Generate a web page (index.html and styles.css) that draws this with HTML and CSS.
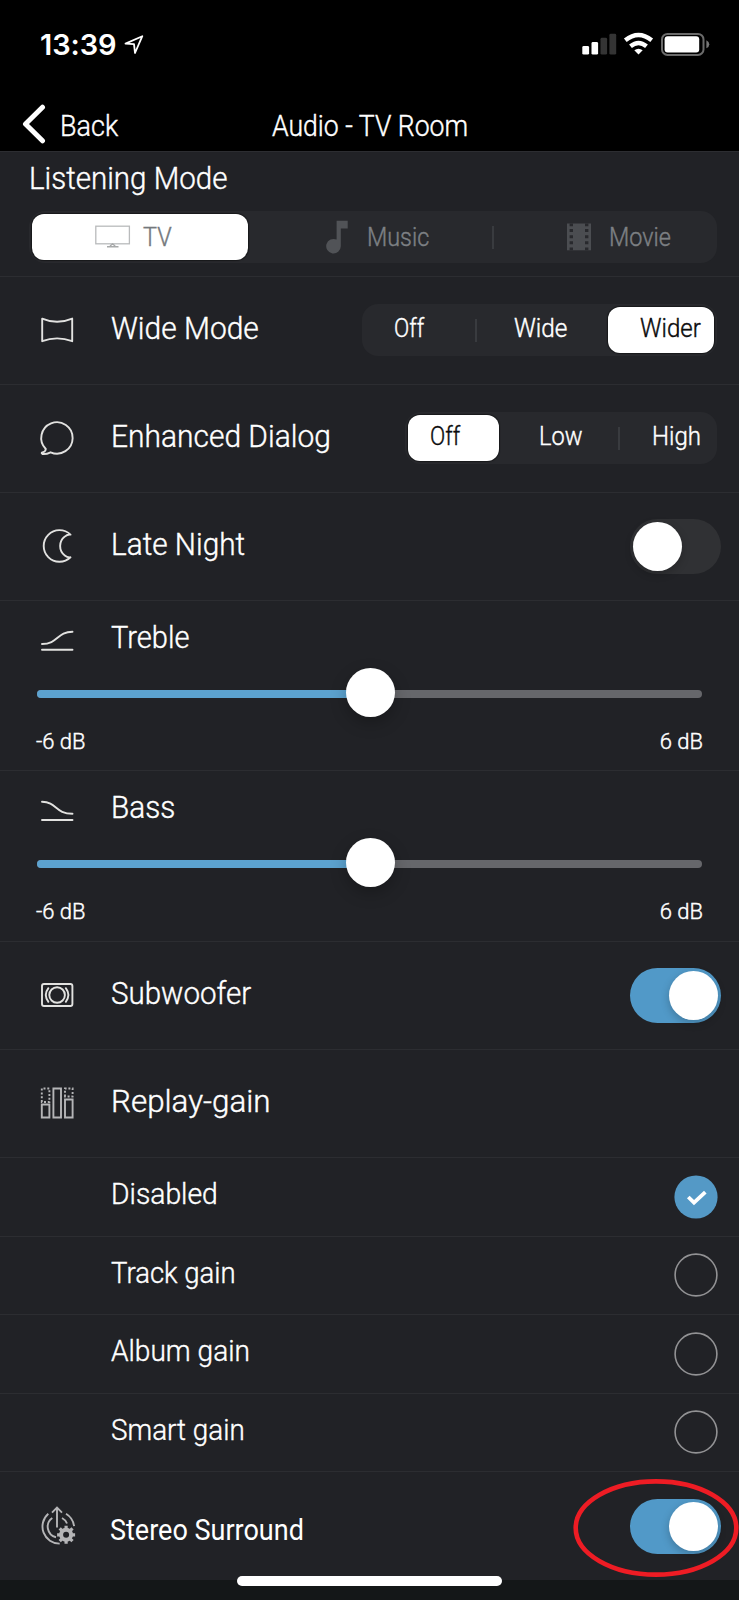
FILE: index.html
```html
<!DOCTYPE html>
<html lang="en">
<head>
<meta charset="utf-8">
<title>Audio - TV Room</title>
<link rel="stylesheet" href="styles.css">
</head>
<body>
<div class="screen">
  <div class="status">
    <span class="time">13:39</span>
    <svg class="loc" width="20" height="20" viewBox="0 0 20 20"><path d="M1.5 8.6 L18.3 1.2 L11 18 L10 9.2 Z" fill="none" stroke="#fff" stroke-width="1.8" stroke-linejoin="round"/></svg>
    <svg class="system" width="128" height="24" viewBox="0 0 128 24">
      <g fill="#fff"><rect x=".3" y="14" width="6.8" height="8.6" rx="1.4"/><rect x="9.5" y="10" width="6.6" height="12.6" rx="1.4"/></g>
      <g fill="#343434"><rect x="18.5" y="5.8" width="6.6" height="16.8" rx="1.4"/><rect x="27.4" y="1.8" width="6.8" height="20.8" rx="1.4"/></g>
      <g fill="none" stroke="#fff" stroke-width="4.4"><path d="M43.3 8.2 Q56.5 -2.3 69.7 8.2"/><path d="M48.5 14.2 Q56.5 7.7 64.5 14.2"/></g>
      <path d="M52.3 18.3 Q56.5 15.3 60.7 18.3 L56.5 22.5 Z" fill="#fff"/>
      <rect x="80" y="1.9" width="41.5" height="21" rx="5.5" fill="none" stroke="#6b6b6b" stroke-width="2"/>
      <rect x="82.6" y="4.2" width="34.6" height="16.2" rx="3" fill="#fff"/>
      <path d="M124.4 8.2 Q127.3 9.5 127.3 12.2 Q127.3 14.9 124.4 16.2Z" fill="#767676"/>
    </svg>
  </div>
  <div class="nav">
    <div class="back">
      <svg width="24" height="40" viewBox="0 0 24 40"><path d="M20.5 3.2 L3.5 20 L20.5 36.8" fill="none" stroke="#fff" stroke-width="5" stroke-linecap="round" stroke-linejoin="round"/></svg>
      <span class="text w930">Back</span>
    </div>
    <span class="text w917">Audio - TV Room</span>
  </div>

  <section class="mode">
    <h2 class="text w923">Listening Mode</h2>
    <div class="seg seg-mode">
      <div class="opt on tv">
        <svg width="36" height="24" viewBox="0 0 36 24"><rect x=".8" y="1.2" width="33.6" height="17.6" fill="none" stroke="#b9bbbc" stroke-width="1.3"/><path d="M12 21.8H23.5M15 21 L17.6 19 L20.2 21" fill="none" stroke="#a7a9aa" stroke-width="1.4"/></svg>
        <span class="text w900">TV</span>
      </div>
      <div class="opt music">
        <svg width="22" height="34" viewBox="0 0 22 34"><path d="M10.6 .7H21.7V8.4H14.8V26.3A7.3 7.3 0 1 1 10.6 19.6Z" fill="#515357"/></svg>
        <span class="text w900">Music</span>
      </div>
      <div class="opt movie">
        <svg width="24" height="28" viewBox="0 0 24 28"><path d="M0 .5H24V27.3H0Z" fill="#4b4d51"/><path d="M2.6 .5V3.2H6V.5ZM2.6 6H6V9H2.6ZM2.6 12.2H6V15.2H2.6ZM2.6 18.2H6V21.2H2.6ZM2.6 24.4H6V27.3H2.6ZM18 .5V3.2H21.4V.5ZM18 6H21.4V9H18ZM18 12.2H21.4V15.2H18ZM18 18.2H21.4V21.2H18ZM18 24.4H21.4V27.3H18Z" fill="#28292d"/></svg>
        <span class="text w900">Movie</span>
      </div>
    </div>
  </section>

  <section class="row">
    <svg class="icon" viewBox="0 0 40 40"><path d="M5.2 8.6 Q20 15 35.2 8.6 V31.2 Q20 25.6 5.2 31.2Z"/></svg>
    <span class="label text w936">Wide Mode</span>
    <div class="seg seg-wide">
      <div class="opt"><span class="text w863">Off</span></div>
      <div class="opt"><span class="text w936">Wide</span></div>
      <div class="opt on"><span class="text w924">Wider</span></div>
    </div>
  </section>

  <section class="row">
    <svg class="icon" viewBox="0 0 40 40"><path d="M8.8 31 A15.7 15.7 0 1 1 13.6 34.3 Q9.5 36.3 5.6 36 Q3.8 35.3 5.4 34.4 Q8.6 33.8 8.8 31Z"/></svg>
    <span class="label text w936">Enhanced Dialog</span>
    <div class="seg seg-dialog">
      <div class="opt on"><span class="text w863">Off</span></div>
      <div class="opt"><span class="text w906">Low</span></div>
      <div class="opt"><span class="text w924">High</span></div>
    </div>
  </section>

  <section class="row">
    <svg class="icon" viewBox="0 0 40 40"><path d="M33.5 8.6 A15.8 15.8 0 1 0 33.5 31.3 Q30.5 31.8 27.8 29.6 A12 12 0 0 1 27.8 10.6 Q30.5 8.3 33.5 8.6Z"/></svg>
    <span class="label text w930">Late Night</span>
    <div class="toggle"></div>
  </section>

  <section class="level">
    <div class="head">
      <svg class="icon" viewBox="0 0 40 40"><path d="M5 26 C21 26 20 13.8 35.5 13.8M5 31.8H35.5"/></svg>
      <span class="label text w908">Treble</span>
    </div>
    <div class="slider"><div class="fill"></div><div class="knob"></div></div>
    <div class="scale"><span>-6 dB</span><span>6 dB</span></div>
  </section>

  <section class="level bass">
    <div class="head">
      <svg class="icon" viewBox="0 0 40 40"><path d="M5 13.8 C20 13.8 18 25.8 35.5 25.8M5 32H35.5"/></svg>
      <span class="label text w930">Bass</span>
    </div>
    <div class="slider"><div class="fill"></div><div class="knob"></div></div>
    <div class="scale"><span>-6 dB</span><span>6 dB</span></div>
  </section>

  <section class="row">
    <svg class="icon" viewBox="0 0 40 40"><rect x="5" y="9" width="30.4" height="22" rx="2"/><circle cx="20.1" cy="20" r="7.8"/><path d="M11.4 13.2 Q6.2 20 11.4 26.8M28.8 13.2 Q34 20 28.8 26.8"/></svg>
    <span class="label text w923">Subwoofer</span>
    <div class="toggle checked"></div>
  </section>

  <section class="row">
    <svg class="icon gray" viewBox="0 0 40 40"><path d="M4.8 21.5H12.4V34.5H4.8ZM16.4 5.5H24V34.5H16.4ZM28 16.5H35.6V34.5H28Z"/><path stroke-dasharray="2 1.8" d="M4.8 19V5.5H12.4V19ZM28 13.5V5.5H35.6V13.5Z"/></svg>
    <span class="label text w980">Replay-gain</span>
  </section>

  <section class="row choice"><span class="label text w943">Disabled</span>
    <svg class="radio" viewBox="0 0 44 44"><circle cx="22" cy="22" r="21.6" fill="#5499c6"/><path d="M14.3 22 L20 27.6 L31.3 17.2" fill="none" stroke="#fff" stroke-width="3.8"/></svg>
  </section>
  <section class="row choice"><span class="label text w917">Track gain</span>
    <svg class="radio" viewBox="0 0 44 44"><circle cx="22" cy="22" r="20.9" fill="none" stroke="#929294" stroke-width="1.6"/></svg>
  </section>
  <section class="row choice"><span class="label text w936">Album gain</span>
    <svg class="radio" viewBox="0 0 44 44"><circle cx="22" cy="22" r="20.9" fill="none" stroke="#929294" stroke-width="1.6"/></svg>
  </section>
  <section class="row choice"><span class="label text w927">Smart gain</span>
    <svg class="radio" viewBox="0 0 44 44"><circle cx="22" cy="22" r="20.9" fill="none" stroke="#929294" stroke-width="1.6"/></svg>
  </section>

  <section class="row stereo">
    <svg class="icon gray" viewBox="0 0 40 40">
      <path d="M20 21.5V2M15 6.7L20 1.7L25 6.7M11.3 7.8A17 17 0 0 0 22.7 37.6M29 7.8A17 17 0 0 1 37.1 20.2M15.3 12A10.7 10.7 0 0 0 19 31.2M25 12A10.7 10.7 0 0 1 30 17.5"/>
      <g transform="translate(29.1 28.8)"><circle r="5" stroke-width="4"/><path stroke-width="3.2" d="M0-5V-9M0 5V9M-5 0H-9M5 0H9M3.6-3.6L6.4-6.4M-3.6 3.6L-6.4 6.4M-3.6-3.6L-6.4-6.4M3.6 3.6L6.4 6.4"/></g>
    </svg>
    <span class="label text w900">Stereo Surround</span>
    <div class="toggle checked"></div>
    <svg class="mark" width="170" height="102" viewBox="0 0 170 102"><ellipse cx="85" cy="51" rx="80.3" ry="46.6" fill="none" stroke="#ee1c24" stroke-width="4.6"/></svg>
  </section>
  <div class="home"><div class="bar"></div></div>
</div>
</body>
</html>
```
FILE: styles.css
```css
* { box-sizing: border-box; }
body { margin: 0; background: #141718; }
.screen {
  width: 739px; height: 1600px; overflow: hidden;
  font-family: Roboto, "Liberation Sans", sans-serif; font-weight: 300;
  color: #fff; display: flex; flex-direction: column;
}
svg { display: block; flex: none; }
h2 { margin: 0; font-weight: 300; }

/* Labels are condensed slightly; each class holds its horizontal ratio. */
.text { display: block; white-space: nowrap; transform: scaleX(var(--sx, 1)); transform-origin: left center; -webkit-text-stroke: .4px currentColor; }
.w863 { --sx: .863; } .w900 { --sx: .9; } .w906 { --sx: .906; }
.w908 { --sx: .908; } .w917 { --sx: .917; } .w923 { --sx: .923; } .w924 { --sx: .924; }
.w927 { --sx: .927; } .w930 { --sx: .93; } .w936 { --sx: .936; }
.w943 { --sx: .943; } .w980 { --sx: .98; }

.status { height: 88px; flex: none; background: #000; display: flex; align-items: flex-start; padding: 32px 29px 0 40px; }
.time { font: 600 29px/25px Inter, sans-serif; width: 84px; letter-spacing: -.1px; }
.loc { margin-top: 3px; }
.system { margin-left: auto; }

.nav { height: 63px; flex: none; background: #000; display: grid; grid-template-columns: 272px 1fr; align-items: center; font-size: 29px; line-height: 40px; padding-top: 13px; }
.back { display: flex; align-items: center; padding-left: 22px; gap: 14px; }
.back svg { margin-top: -4px; }

section { background: #212226; border-top: 1px solid #2c2d31; flex: none; }
.mode { height: 125px; padding: 6px 22px 0 29px; }
.mode h2 { font-size: 32px; line-height: 40px; margin-bottom: 13px; }

.seg { display: grid; height: 52px; padding: 3px; border-radius: 16px; background: #28292d; font-size: 26px; line-height: 36px; flex: none; }
.opt { display: flex; align-items: center; }
.opt.on { background: #fff; color: #0c0c0d; border-radius: 12px; box-shadow: 0 0 1px 1px #17181a; }
.seg-mode { grid-template-columns: 216px 246px 1fr; color: #7d8084; }
.seg-mode .on { color: #74787c; }
.tv { padding-left: 63px; gap: 12px; }
.music { padding-left: 78px; gap: 19px; }
.movie { padding-left: 73px; gap: 18px; }
.music::after, .seg-wide .opt:first-child::after, .seg-dialog .opt:nth-child(2)::after {
  content: ""; width: 2px; height: 23px; background: #393b3f; margin-left: auto;
}
.seg-wide, .seg-dialog { margin-top: -1px; }
.seg-wide .text, .seg-dialog .text { margin-bottom: 4px; }
.seg-wide { width: 355px; grid-template-columns: 112px 131px 1fr; }
.seg-wide .opt { padding-left: 29px; }
.seg-wide .opt:nth-child(2) { padding-left: 37px; }
.seg-wide .on { padding-left: 32px; }
.seg-dialog { width: 312px; grid-template-columns: 91px 121px 1fr; }
.seg-dialog .opt { padding-left: 22px; }
.seg-dialog .opt:nth-child(2) { padding-left: 40px; }
.seg-dialog .opt:nth-child(3) { padding-left: 32px; }

.row { height: 108px; display: flex; align-items: center; padding: 0 22px 0 37px; position: relative; }
.icon { width: 40px; height: 40px; overflow: visible; fill: none; stroke: #e2e2e0; stroke-width: 1.9; stroke-linecap: round; stroke-linejoin: round; }
.icon.gray { stroke: #b5b5b7; stroke-linecap: butt; stroke-linejoin: miter; }
.label { font-size: 32px; line-height: 40px; width: 240px; margin-left: 34px; }
.row .label { margin-bottom: 6px; margin-right: auto; }
.row .icon { margin-top: -1px; }

.toggle { width: 91px; height: 55px; border-radius: 28px; background: #303134; padding: 3px; display: flex; margin-right: -4px; flex: none; }
.toggle::before { content: ""; width: 49px; height: 49px; border-radius: 50%; background: #fff; box-shadow: 0 3px 9px rgba(0,0,0,.22); }
.toggle.checked { background: #5199c8; justify-content: flex-end; }

.level { height: 170px; padding: 16px 37px 0; }
.level.bass { height: 171px; }
.head { display: flex; align-items: center; height: 40px; }
.slider { height: 49px; display: flex; align-items: center; position: relative; margin-top: 11px; }
.slider::before { content: ""; position: absolute; left: 0; right: 0; top: 22px; height: 8px; border-radius: 4px; background: #66676b; }
.fill { position: relative; width: 50%; height: 8px; background: #5ca2cf; border-radius: 4px; margin-top: 3px; }
.knob { position: relative; width: 49px; height: 49px; border-radius: 50%; background: #fff; margin-left: -24px; box-shadow: 0 6px 16px rgba(0,0,0,.25); }
.scale { display: flex; justify-content: space-between; font-size: 22px; line-height: 30px; margin: 10px -1px 0 -1px; -webkit-text-stroke: .4px currentColor; }
.level .icon { position: relative; top: 1px; }

.choice { height: 78.5px; padding: 0 21px 0 78px; }
.choice .label { font-size: 30px; margin-left: 33px; margin-bottom: 5px; }
.radio { width: 44px; height: 44px; }
.stereo { height: 109px; }
.stereo .label { font-size: 30px; font-weight: 400; margin: 7px auto 0 33px; -webkit-text-stroke: 0; }
.mark { position: absolute; left: 571px; top: 5px; }

.home { position: relative; flex: 1; background: #141718; }
.bar { position: absolute; left: 237px; top: -4px; width: 265px; height: 10px; border-radius: 5px; background: #fff; }
```
